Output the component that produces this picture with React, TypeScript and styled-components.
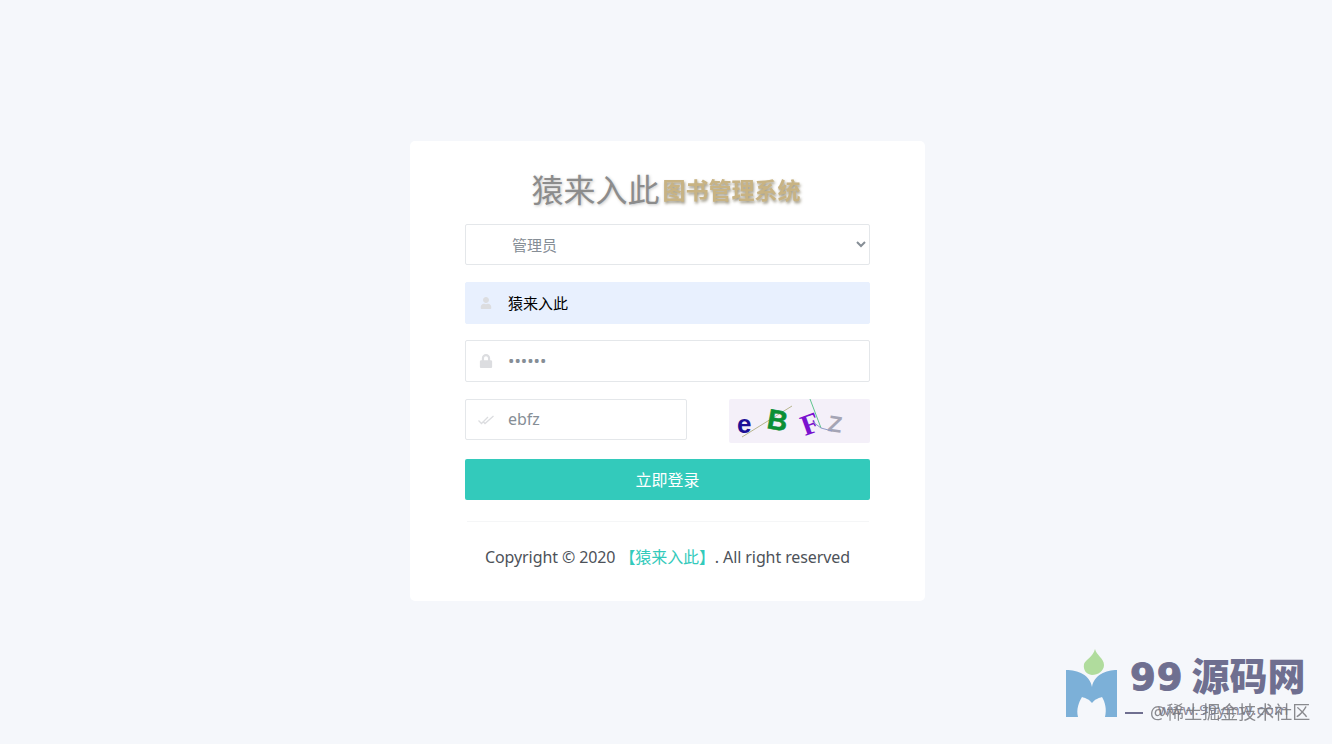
import { createGlobalStyle, styled } from 'styled-components';
import { FaLock, FaUser } from 'react-icons/fa';

const CJK = '"Noto Sans", "Noto Sans CJK SC", sans-serif';

const GlobalStyle = createGlobalStyle`
  html, body {
    margin: 0;
    padding: 0;
    background: #f5f7fb;
    font-family: ${CJK};
  }
`;

const App = () => {
  return (
    <Page>
      <GlobalStyle />
      <Card>
        <Logo>
          <LogoName>猿来入此</LogoName>
          <LogoSub>图书管理系统</LogoSub>
        </Logo>
        <RoleSelect defaultValue="admin">
          <option value="admin">管理员</option>
          <option value="reader">读者</option>
        </RoleSelect>
        <Field $filled>
          <FieldIcon>
            <FaUser size={12} />
          </FieldIcon>
          <FieldInput $dark defaultValue="猿来入此" />
        </Field>
        <Field>
          <FieldIcon>
            <FaLock size={14} />
          </FieldIcon>
          <FieldInput $size={17} type="password" defaultValue="123456" />
        </Field>
        <CaptchaRow>
          <Field $short>
            <FieldIcon>
              <svg width="16" height="10" viewBox="0 0 16 10" fill="none" stroke="currentColor" strokeWidth="1.3">
                <path d="M0.5 5.5 L3.5 8.5 L10 2" />
                <path d="M5 6.5 L7 8.5 L15.5 1" />
              </svg>
            </FieldIcon>
            <FieldInput $size={16} defaultValue="ebfz" />
          </Field>
          <Captcha viewBox="0 0 141 44" role="img">
            <rect width="141" height="44" rx="2" fill="#f4f0f9" />
            <line x1="13" y1="38" x2="63" y2="7" stroke="#b7b58d" strokeWidth="1" />
            <text x="8" y="34" fontFamily="Liberation Sans" fontWeight="700" fontSize="26" fill="#1d0f96">e</text>
            <text
              transform="translate(37 29) rotate(10)"
              fontFamily="Liberation Sans"
              fontWeight="700"
              fontSize="28"
              fill="#0b8f35"
              stroke="#0b8f35"
              strokeWidth="0.6"
            >
              B
            </text>
            <text transform="translate(76 37) rotate(-20)" fontFamily="Liberation Serif" fontWeight="700" fontSize="29" fill="#7a12cf">F</text>
            <text transform="translate(98 32) rotate(8)" fontFamily="Liberation Sans" fontWeight="700" fontSize="23" fill="#a5a5b5">Z</text>
            <path d="M81 0 L92 29" stroke="#5fc58d" strokeWidth="1" fill="none" />
            <path d="M84 23 L92 29 L103 32" stroke="#8f9cc8" strokeWidth="1" fill="none" />
          </Captcha>
        </CaptchaRow>
        <SubmitButton type="button">立即登录</SubmitButton>
        <Divider />
        <Copyright>
          Copyright © 2020 <BrandLink>【猿来入此】</BrandLink>. All right reserved
        </Copyright>
      </Card>
      <Watermark>
        <svg width="52" height="70" viewBox="0 0 52 70">
          <path d="M29 0 C30 6 38 9 38 16 C38 22 32 26 26 26 C20 25 17 21 18 15 C20 10 27 8 29 0Z" fill="#b0dc9d" />
          <path
            d="M0 21 C12 21 24 26 26 38 C28 26 40 21 51 21 L51 68 L39 68 C41 60 39 53 36 48 C33 49 29 50 26 54 C23 50 19 49 16 48 C13 53 10 60 12 68 L0 68Z"
            fill="#7cb0d8"
          />
        </svg>
        <WatermarkBody>
          <WatermarkTitle>
            <WatermarkDigits>99</WatermarkDigits>源码网
          </WatermarkTitle>
          <WatermarkRule />
        </WatermarkBody>
        <WatermarkUrl>www.99ymw.com</WatermarkUrl>
        <WatermarkCredit>@稀土掘金技术社区</WatermarkCredit>
      </Watermark>
    </Page>
  );
};

export default App;

const Page = styled.div`
  position: relative;
  display: flex;
  align-items: center;
  justify-content: center;
  box-sizing: border-box;
  height: 100vh;
  padding: 0 0 2px 3px;
  overflow: hidden;
  background: #f5f7fb;
`;

const Card = styled.form`
  display: flex;
  flex-direction: column;
  box-sizing: border-box;
  width: 515px;
  height: 460px;
  padding: 30px 55px 0;
  background: #fff;
  border-radius: 5px;
`;

const Logo = styled.div`
  display: flex;
  align-items: center;
  justify-content: center;
  height: 38px;
  margin: 0 0 15px;
  padding-right: 3px;
  white-space: nowrap;
`;

const LogoName = styled.span`
  font-size: 32px;
  line-height: 38px;
  color: #8c8c8c;
  text-shadow: 1px 1px 3px rgba(90, 90, 90, 0.35);
`;

const LogoSub = styled.span`
  font-size: 23px;
  font-weight: 700;
  line-height: 38px;
  margin-left: 3px;
  color: #c8b383;
  text-shadow: 1px 2px 3px rgba(90, 80, 50, 0.6);
  filter: blur(0.7px);
`;

const RoleSelect = styled.select`
  box-sizing: border-box;
  width: 405px;
  height: 41px;
  margin-bottom: 17px;
  padding-left: 42px;
  border: 1px solid #e4e7ea;
  border-radius: 2px;
  background: #fff;
  color: #868e96;
  font-family: ${CJK};
  font-size: 15px;
  outline: none;
`;

const Field = styled.label<{ $filled?: boolean; $short?: boolean }>`
  display: flex;
  align-items: center;
  box-sizing: border-box;
  width: ${(p) => (p.$short ? '222px' : '405px')};
  height: ${(p) => (p.$short ? '41px' : '42px')};
  margin-bottom: ${(p) => (p.$short ? '0' : '16px')};
  border: 1px solid ${(p) => (p.$filled ? '#e8f0fe' : '#e4e7ea')};
  border-radius: 2px;
  background: ${(p) => (p.$filled ? '#e8f0fe' : '#fff')};
`;

const FieldIcon = styled.span`
  display: flex;
  align-items: center;
  justify-content: center;
  flex: none;
  box-sizing: border-box;
  width: 42px;
  padding-right: 3px;
  color: #dcdde0;
`;

const FieldInput = styled.input<{ $dark?: boolean; $size?: number }>`
  flex: 1;
  min-width: 0;
  padding: 0 0 2px;
  border: 0;
  outline: none;
  background: transparent;
  color: ${(p) => (p.$dark ? '#000' : '#868e96')};
  font-family: ${CJK};
  font-size: ${(p) => p.$size ?? 15}px;
`;

const CaptchaRow = styled.div`
  display: flex;
  align-items: flex-start;
  justify-content: space-between;
  height: 44px;
  margin: 1px 0 16px;
`;

const Captcha = styled.svg`
  display: block;
  width: 141px;
  height: 44px;
`;

const SubmitButton = styled.button`
  width: 405px;
  height: 41px;
  padding: 0 0 2px;
  border: 0;
  border-radius: 2px;
  background: #33cabb;
  color: #fff;
  font-family: ${CJK};
  font-size: 16px;
`;

const Divider = styled.hr`
  width: 402px;
  height: 1px;
  margin: 21px 0 0 2px;
  border: 0;
  background: #f5f6f7;
`;

const Copyright = styled.p`
  margin: 24px 0 0;
  color: #4d5259;
  font-size: 16px;
  line-height: 22px;
  letter-spacing: -0.1px;
  text-align: center;
  white-space: nowrap;
`;

const BrandLink = styled.span`
  color: #33cabb;
`;

const Watermark = styled.div`
  position: absolute;
  left: 1066px;
  top: 649px;
  display: flex;
  gap: 12px;
`;

const WatermarkBody = styled.div`
  display: flex;
  flex-direction: column;
  padding-top: 1px;
`;

const WatermarkTitle = styled.div`
  color: #6f6f90;
  font-family: "Noto Sans CJK SC", sans-serif;
  font-size: 38px;
  font-weight: 900;
  line-height: 48px;
  white-space: nowrap;
`;

const WatermarkDigits = styled.span`
  display: inline-block;
  margin-right: 8px;
  font-family: "DejaVu Sans", sans-serif;
  font-size: 37px;
  font-weight: 700;
  letter-spacing: 1px;
  -webkit-text-stroke: 1px #6f6f90;
`;

const WatermarkRule = styled.div`
  width: 18px;
  height: 2px;
  margin: 10px 0 0 -5px;
  background: #6f6f90;
`;

const WatermarkUrl = styled.div`
  position: absolute;
  left: 92px;
  top: 50px;
  color: #8a8a9c;
  font-size: 15px;
  letter-spacing: 0.6px;
  line-height: 20px;
  white-space: nowrap;
`;

const WatermarkCredit = styled.div`
  position: absolute;
  left: 84px;
  top: 51px;
  color: #77777c;
  font-size: 18px;
  line-height: 24px;
  white-space: nowrap;
  opacity: 0.85;
`;
